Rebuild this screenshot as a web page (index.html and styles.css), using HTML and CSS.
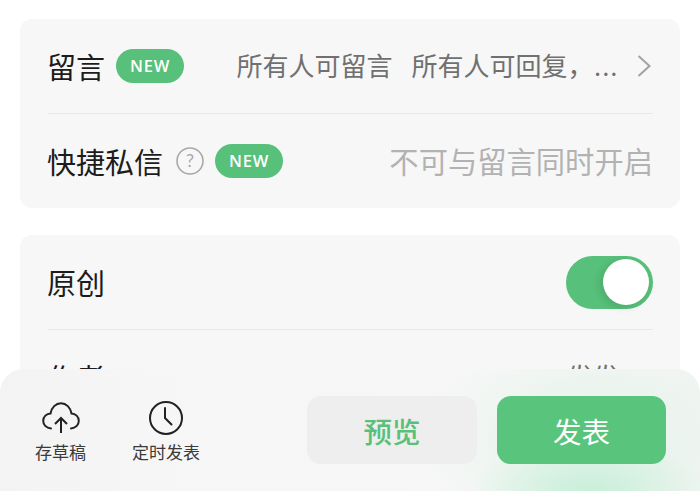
FILE: index.html
```html
<!DOCTYPE html>
<html lang="zh-CN">
<head>
  <meta charset="UTF-8">
  <meta name="viewport" content="width=device-width, initial-scale=1.0">
  <title>发表</title>
  <link rel="stylesheet" href="styles.css">
</head>
<body>
  <div class="page">
    <div class="card">
      <div class="row">
        <span class="label">留言</span>
        <span class="badge">NEW</span>
        <span class="value value-dark">所有人可留言<span class="value-gap"></span>所有人可回复，<span class="dots">...</span></span>
        <svg class="chevron" width="14" height="24" viewBox="0 0 14 24">
          <path d="M1.5 2 L12.5 12 L1.5 22" fill="none" stroke="#a3a3a3" stroke-width="2"/>
        </svg>
      </div>
      <div class="row row-last">
        <span class="label">快捷私信</span>
        <svg class="help" width="28" height="28" viewBox="0 0 28 28">
          <circle cx="14" cy="14" r="13" fill="none" stroke="#a8a8a8" stroke-width="1.6"/>
          <text x="14" y="20" text-anchor="middle" class="help-mark">?</text>
        </svg>
        <span class="badge">NEW</span>
        <span class="value value-light">不可与留言同时开启</span>
      </div>
    </div>

    <div class="card">
      <div class="row">
        <span class="label">原创</span>
        <div class="switch"><div class="knob"></div></div>
      </div>
      <div class="row row-last">
        <span class="label">作者</span>
        <span class="value value-dark value-author">发发</span>
      </div>
    </div>
  </div>

  <!-- bottom action bar sits over the list -->
  <div class="bar">
    <div class="bar-tool tool-draft">
      <svg width="38" height="32" viewBox="0 0 38 32">
        <path d="M9 26.500 C4.500 26 1.200 23 1.200 18.800 C1.200 14.600 4.500 11.600 8.500 11.500 C9.500 5.500 13.800 1.200 19 1.200 C24.200 1.200 28.500 5.500 29.500 11.500 C33.500 11.600 36.800 14.600 36.800 18.800 C36.800 23 33.500 26 29 26.500" fill="none" stroke="#222" stroke-width="2" stroke-linecap="round"/>
        <path d="M19 31 V16 M13 22 L19 16 L25 22" fill="none" stroke="#222" stroke-width="2"/>
      </svg>
      <span>存草稿</span>
    </div>
    <div class="bar-tool tool-timer">
      <svg width="36" height="36" viewBox="0 0 36 36">
        <circle cx="18" cy="18" r="16" fill="none" stroke="#222" stroke-width="2"/>
        <path d="M17 8 V18 L23.500 24.500" fill="none" stroke="#222" stroke-width="2" stroke-linecap="round"/>
      </svg>
      <span>定时发表</span>
    </div>
    <div class="bar-actions">
      <button class="btn btn-preview">预览</button>
      <button class="btn btn-publish">发表</button>
    </div>
  </div>
</body>
</html>
```

FILE: styles.css
```css
html, body {
  margin: 0;
  height: 100%;
  overflow: hidden;
  background: #fff;
  font-family: "Noto Sans CJK SC", "Noto Sans", sans-serif;
}

.page {
  display: flex;
  flex-direction: column;
  gap: 27px;
  padding: 19px 20px 0;
}

.card {
  background: #f7f7f7;
  border-radius: 12px;
  padding: 0 27px 0 28px;
}

.row {
  display: flex;
  align-items: center;
  height: 94px;
  border-bottom: 1px solid #e8e8e8;
}

.row-last {
  border-bottom: none;
}

.label {
  margin-left: -1px;
  margin-right: 1px;
  font-size: 29px;
  line-height: 40px;
  color: #1c1c1c;
}

.badge {
  width: 68px;
  height: 34px;
  margin-left: 10px;
  border-radius: 17px;
  background: #57c07a;
  color: #fff;
  font-family: "Open Sans", sans-serif;
  font-size: 16.500px;
  font-weight: 600;
  letter-spacing: 0.8px;
  line-height: 34px;
  text-align: center;
}

.help {
  margin-left: 12px;
}

.help + .badge {
  margin-left: 11px;
}

.help-mark {
  font-family: Lato, sans-serif;
  font-size: 18px;
  fill: #a8a8a8;
}

.value {
  margin-left: auto;
  padding-bottom: 3px;
  white-space: nowrap;
}

.value-dark {
  font-size: 26px;
  color: #707070;
}

.value-light {
  font-size: 29.300px;
  color: #b2b2b2;
}

.value-author {
  margin-right: 34px;
}

.value-gap {
  display: inline-block;
  width: 19px;
}

.dots {
  margin-left: 1px;
  font-family: Lato, sans-serif;
  letter-spacing: 2px;
}

.chevron {
  margin-left: 18px;
  margin-right: 2px;
}

.switch {
  display: flex;
  align-items: center;
  justify-content: flex-end;
  box-sizing: border-box;
  width: 87px;
  height: 53px;
  margin-left: auto;
  padding-right: 4px;
  border-radius: 27px;
  background: #57c07a;
}

.knob {
  width: 46px;
  height: 46px;
  border-radius: 50%;
  background: #fff;
  box-shadow: -3px 2px 8px rgba(0, 0, 0, 0.12);
}

.bar {
  position: absolute;
  left: 0;
  right: 0;
  bottom: 0;
  height: 122px;
  display: flex;
  box-sizing: border-box;
  padding-top: 27px;
  border-radius: 24px 24px 0 0;
  background:
    radial-gradient(ellipse 120px 50px at 590px 122px, rgba(190, 238, 210, 0.8), rgba(190, 238, 210, 0)),
    radial-gradient(ellipse 180px 110px at 590px 70px, rgba(215, 240, 225, 0.6), rgba(215, 240, 225, 0)),
    linear-gradient(90deg, #f3f3f3 0, #f6f6f6 150px, #f7f7f7 500px, #f4f5f4 100%);
}

.bar-tool {
  display: flex;
  flex-direction: column;
  align-items: center;
  padding-top: 4px;
  font-size: 17px;
  line-height: 24px;
  color: #3a3a3a;
}

.bar-tool svg {
  height: 36px;
  margin-bottom: 4px;
}

.tool-draft {
  margin-left: 35px;
}

.tool-timer {
  margin-left: 46px;
}

.bar-actions {
  display: flex;
  gap: 20px;
  margin-left: auto;
  margin-right: 34px;
}

.btn {
  width: 170px;
  height: 68px;
  padding: 0;
  border: none;
  border-radius: 14px;
  font-family: inherit;
  font-size: 28.500px;
  font-weight: 500;
}

.btn-preview {
  background: #eeeeee;
  color: #57c07a;
}

.btn-publish {
  width: 169px;
  background: #58c47c;
  color: #fff;
  font-weight: 400;
}
```
